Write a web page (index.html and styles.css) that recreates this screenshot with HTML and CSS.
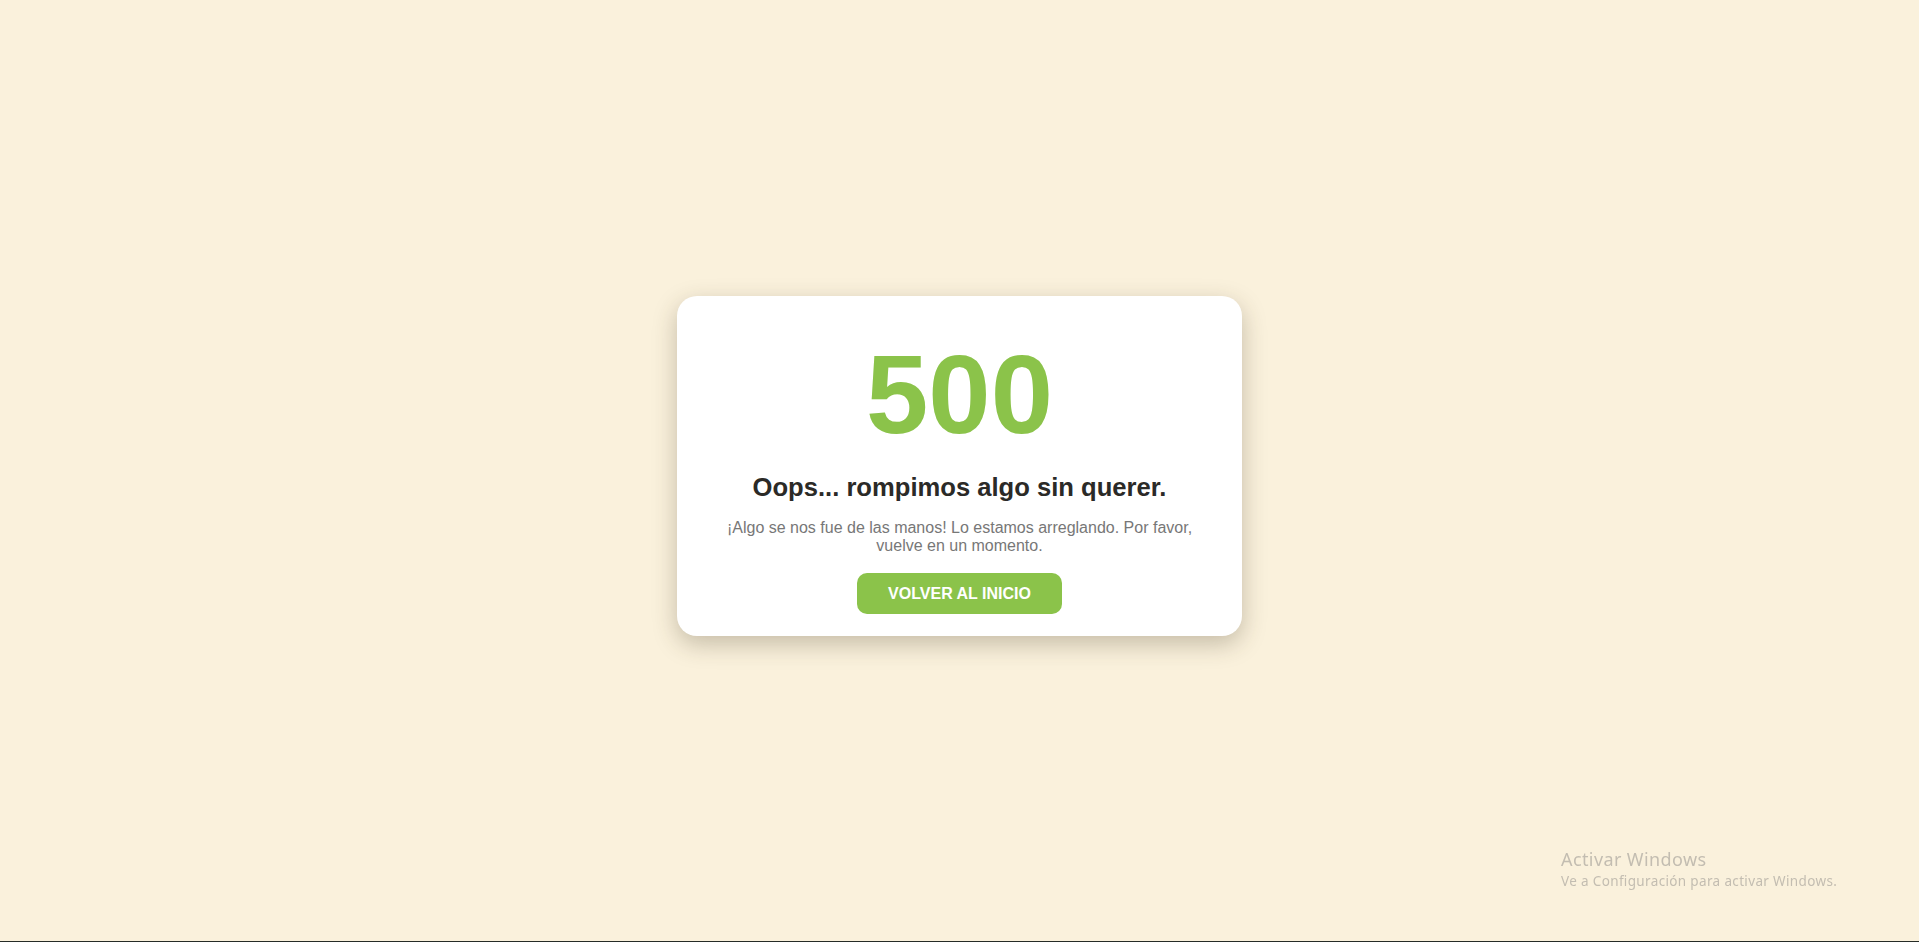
FILE: index.html
```html
<!DOCTYPE html>
<html lang="es">
<head>
<meta charset="utf-8">
<title>500 - Error</title>
<link rel="stylesheet" href="styles.css">
</head>
<body>
<main class="page">
  <section class="card">
    <h1 class="code">500</h1>
    <h2 class="title">Oops... rompimos algo sin querer.</h2>
    <p class="message">¡Algo se nos fue de las manos! Lo estamos arreglando. Por favor, vuelve en un momento.</p>
    <a class="btn" href="#">VOLVER AL INICIO</a>
  </section>
</main>
<div class="watermark">
  <div class="wm-title">Activar Windows</div>
  <div class="wm-sub">Ve a Configuración para activar Windows.</div>
</div>
<div class="taskbar-edge"></div>
</body>
</html>
```

FILE: styles.css
```css
html, body {
  margin: 0;
  padding: 0;
}

body {
  background: #faf1dc;
  font-family: "Liberation Sans", Arial, sans-serif;
}

.page {
  min-height: 100vh;
  box-sizing: border-box;
  padding-bottom: 10px;
  display: flex;
  align-items: center;
  justify-content: center;
}

.card {
  width: 501px;
  background: #ffffff;
  border-radius: 20px;
  padding: 20px 32px 22px;
  box-shadow: 0 8px 24px rgba(60, 50, 30, 0.28);
  text-align: center;
  display: flex;
  flex-direction: column;
  align-items: center;
}

.code {
  margin: 14px 0 0;
  font-size: 112px;
  font-weight: 700;
  line-height: normal;
  color: #8bc34a;
}

.title {
  margin: 14px 0 0;
  font-size: 25.6px;
  font-weight: 700;
  line-height: normal;
  color: #2b2a27;
}

.message {
  margin: 16.5px 0 0;
  font-size: 16px;
  line-height: normal;
  color: #777777;
}

.btn {
  margin-top: 18.5px;
  display: inline-block;
  padding: 11.5px 31px;
  background: #8bc34a;
  color: #ffffff;
  font-size: 16px;
  font-weight: 700;
  line-height: normal;
  text-decoration: none;
  border-radius: 10px;
}

.watermark {
  position: fixed;
  left: 1561px;
  top: 848px;
  font-family: "Noto Sans", "Open Sans", sans-serif;
  color: #c3bdb1;
}

.wm-title {
  font-size: 18px;
  line-height: 22px;
  letter-spacing: 0.4px;
}

.wm-sub {
  font-size: 13.5px;
  line-height: 18px;
  letter-spacing: 0.35px;
  margin-top: 2px;
}

.taskbar-edge {
  position: fixed;
  left: 0;
  right: 0;
  bottom: 0;
  height: 1px;
  background: #262c27;
}
```
